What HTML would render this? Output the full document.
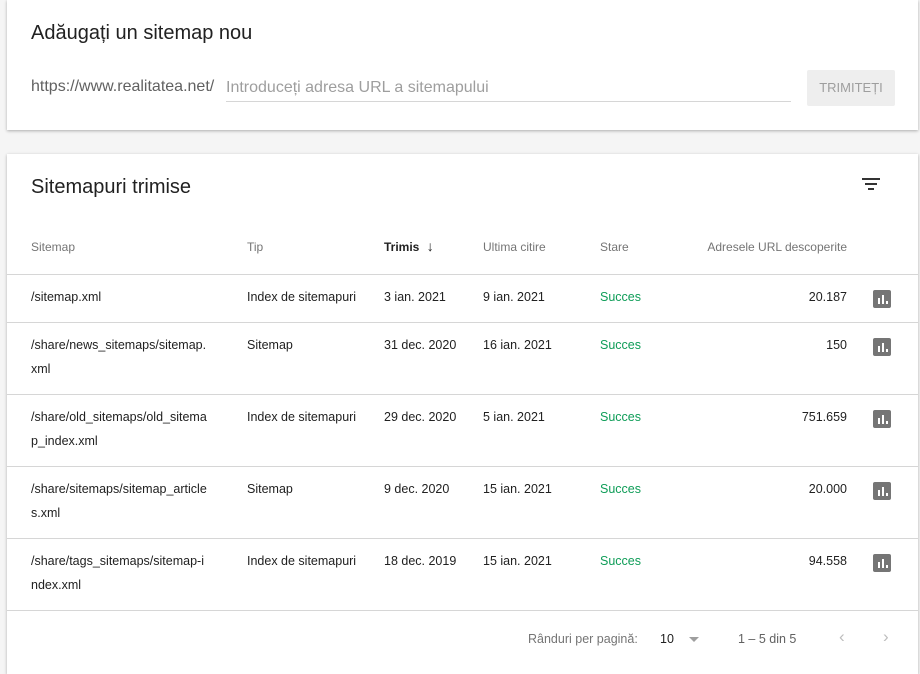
<!DOCTYPE html>
<html><head><meta charset="utf-8"><style>
*{margin:0;padding:0;box-sizing:border-box}
body{width:920px;height:665px;background:#f5f5f5;font-family:"Liberation Sans",sans-serif;position:relative;overflow:hidden;color:#212121}
.card{position:absolute;background:#fff;box-shadow:0 1px 3px rgba(0,0,0,.3)}
.a{position:absolute;white-space:nowrap}
.h1{font-size:20px;color:#212121}
.th{font-size:12px;color:#757575}
.td{font-size:12.5px;color:#212121;line-height:24px}
.g{color:#0f9d58}
.line{position:absolute;left:0;right:0;height:1px;background:#d6d6d6}
.ic{position:absolute;left:866px;width:18px;height:18px;background:#757575;border-radius:2px}
.ic i{position:absolute;bottom:4px;width:2px;background:#fff}
</style></head><body>
<div class="card" style="left:7px;top:0;width:911px;height:130px">
 <div class="a h1" style="left:24px;top:22px">Adăugați un sitemap nou</div>
 <div class="a" style="left:24px;top:78px;font-size:16px;color:#616161">https://www.realitatea.net/</div>
 <div class="a" style="left:219px;top:79px;font-size:16px;color:#9e9e9e">Introduceți adresa URL a sitemapului</div>
 <div style="position:absolute;left:219px;top:101px;width:565px;height:1px;background:#d6d6d6"></div>
 <div class="a" style="left:800px;top:70px;width:88px;height:36px;background:#eeeeee;border-radius:2px;font-size:13px;color:#9e9e9e;text-align:center;line-height:36px">TRIMITEȚI</div>
</div>
<div class="card" style="left:7px;top:154px;width:911px;height:520px">
 <div class="a h1" style="left:24px;top:22px">Sitemapuri trimise</div>
 <div style="position:absolute;left:855px;top:24px;width:18px;height:2px;background:#333"></div>
 <div style="position:absolute;left:858px;top:29px;width:12px;height:2px;background:#333"></div>
 <div style="position:absolute;left:861px;top:34px;width:6px;height:2px;background:#333"></div>
 <div class="a th" style="left:24px;top:86px">Sitemap</div>
 <div class="a th" style="left:240px;top:86px">Tip</div>
 <div class="a th" style="left:377px;top:84px;color:#212121;font-weight:bold">Trimis <span style="font-weight:normal;font-size:14px;margin-left:4px">↓</span></div>
 <div class="a th" style="left:476px;top:86px">Ultima citire</div>
 <div class="a th" style="left:593px;top:86px">Stare</div>
 <div class="a th" style="right:71px;top:86px">Adresele URL descoperite</div>
 <div class="line" style="top:120px"></div>

 <div class="a td" style="left:24px;top:131px">/sitemap.xml</div>
 <div class="a td" style="left:240px;top:131px">Index de sitemapuri</div>
 <div class="a td" style="left:377px;top:131px">3 ian. 2021</div>
 <div class="a td" style="left:476px;top:131px">9 ian. 2021</div>
 <div class="a td g" style="left:593px;top:131px">Succes</div>
 <div class="a td" style="right:71px;top:131px">20.187</div>
 <div class="ic" style="top:136px"><i style="left:5px;height:6px"></i><i style="left:9px;height:9px"></i><i style="left:13px;height:3px"></i></div>
 <div class="line" style="top:168px"></div>

 <div class="a td" style="left:24px;top:179px">/share/news_sitemaps/sitemap.<br>xml</div>
 <div class="a td" style="left:240px;top:179px">Sitemap</div>
 <div class="a td" style="left:377px;top:179px">31 dec. 2020</div>
 <div class="a td" style="left:476px;top:179px">16 ian. 2021</div>
 <div class="a td g" style="left:593px;top:179px">Succes</div>
 <div class="a td" style="right:71px;top:179px">150</div>
 <div class="ic" style="top:184px"><i style="left:5px;height:6px"></i><i style="left:9px;height:9px"></i><i style="left:13px;height:3px"></i></div>
 <div class="line" style="top:240px"></div>

 <div class="a td" style="left:24px;top:251px">/share/old_sitemaps/old_sitema<br>p_index.xml</div>
 <div class="a td" style="left:240px;top:251px">Index de sitemapuri</div>
 <div class="a td" style="left:377px;top:251px">29 dec. 2020</div>
 <div class="a td" style="left:476px;top:251px">5 ian. 2021</div>
 <div class="a td g" style="left:593px;top:251px">Succes</div>
 <div class="a td" style="right:71px;top:251px">751.659</div>
 <div class="ic" style="top:256px"><i style="left:5px;height:6px"></i><i style="left:9px;height:9px"></i><i style="left:13px;height:3px"></i></div>
 <div class="line" style="top:312px"></div>

 <div class="a td" style="left:24px;top:323px">/share/sitemaps/sitemap_article<br>s.xml</div>
 <div class="a td" style="left:240px;top:323px">Sitemap</div>
 <div class="a td" style="left:377px;top:323px">9 dec. 2020</div>
 <div class="a td" style="left:476px;top:323px">15 ian. 2021</div>
 <div class="a td g" style="left:593px;top:323px">Succes</div>
 <div class="a td" style="right:71px;top:323px">20.000</div>
 <div class="ic" style="top:328px"><i style="left:5px;height:6px"></i><i style="left:9px;height:9px"></i><i style="left:13px;height:3px"></i></div>
 <div class="line" style="top:384px"></div>

 <div class="a td" style="left:24px;top:395px">/share/tags_sitemaps/sitemap-i<br>ndex.xml</div>
 <div class="a td" style="left:240px;top:395px">Index de sitemapuri</div>
 <div class="a td" style="left:377px;top:395px">18 dec. 2019</div>
 <div class="a td" style="left:476px;top:395px">15 ian. 2021</div>
 <div class="a td g" style="left:593px;top:395px">Succes</div>
 <div class="a td" style="right:71px;top:395px">94.558</div>
 <div class="ic" style="top:400px"><i style="left:5px;height:6px"></i><i style="left:9px;height:9px"></i><i style="left:13px;height:3px"></i></div>
 <div class="line" style="top:456px"></div>

 <div class="a" style="left:521px;top:478px;font-size:12.5px;color:#757575">Rânduri per pagină:</div>
 <div class="a" style="left:653px;top:478px;font-size:12.5px;color:#212121">10</div>
 <div style="position:absolute;left:682px;top:483px;width:0;height:0;border-left:5px solid transparent;border-right:5px solid transparent;border-top:5px solid #9e9e9e"></div>
 <div class="a" style="left:731px;top:478px;font-size:12.5px;color:#616161">1 – 5 din 5</div>
 <div class="a" style="left:832px;top:473px;font-size:17px;color:#bdbdbd">‹</div>
 <div class="a" style="left:876px;top:473px;font-size:17px;color:#bdbdbd">›</div>
</div>
</body></html>
